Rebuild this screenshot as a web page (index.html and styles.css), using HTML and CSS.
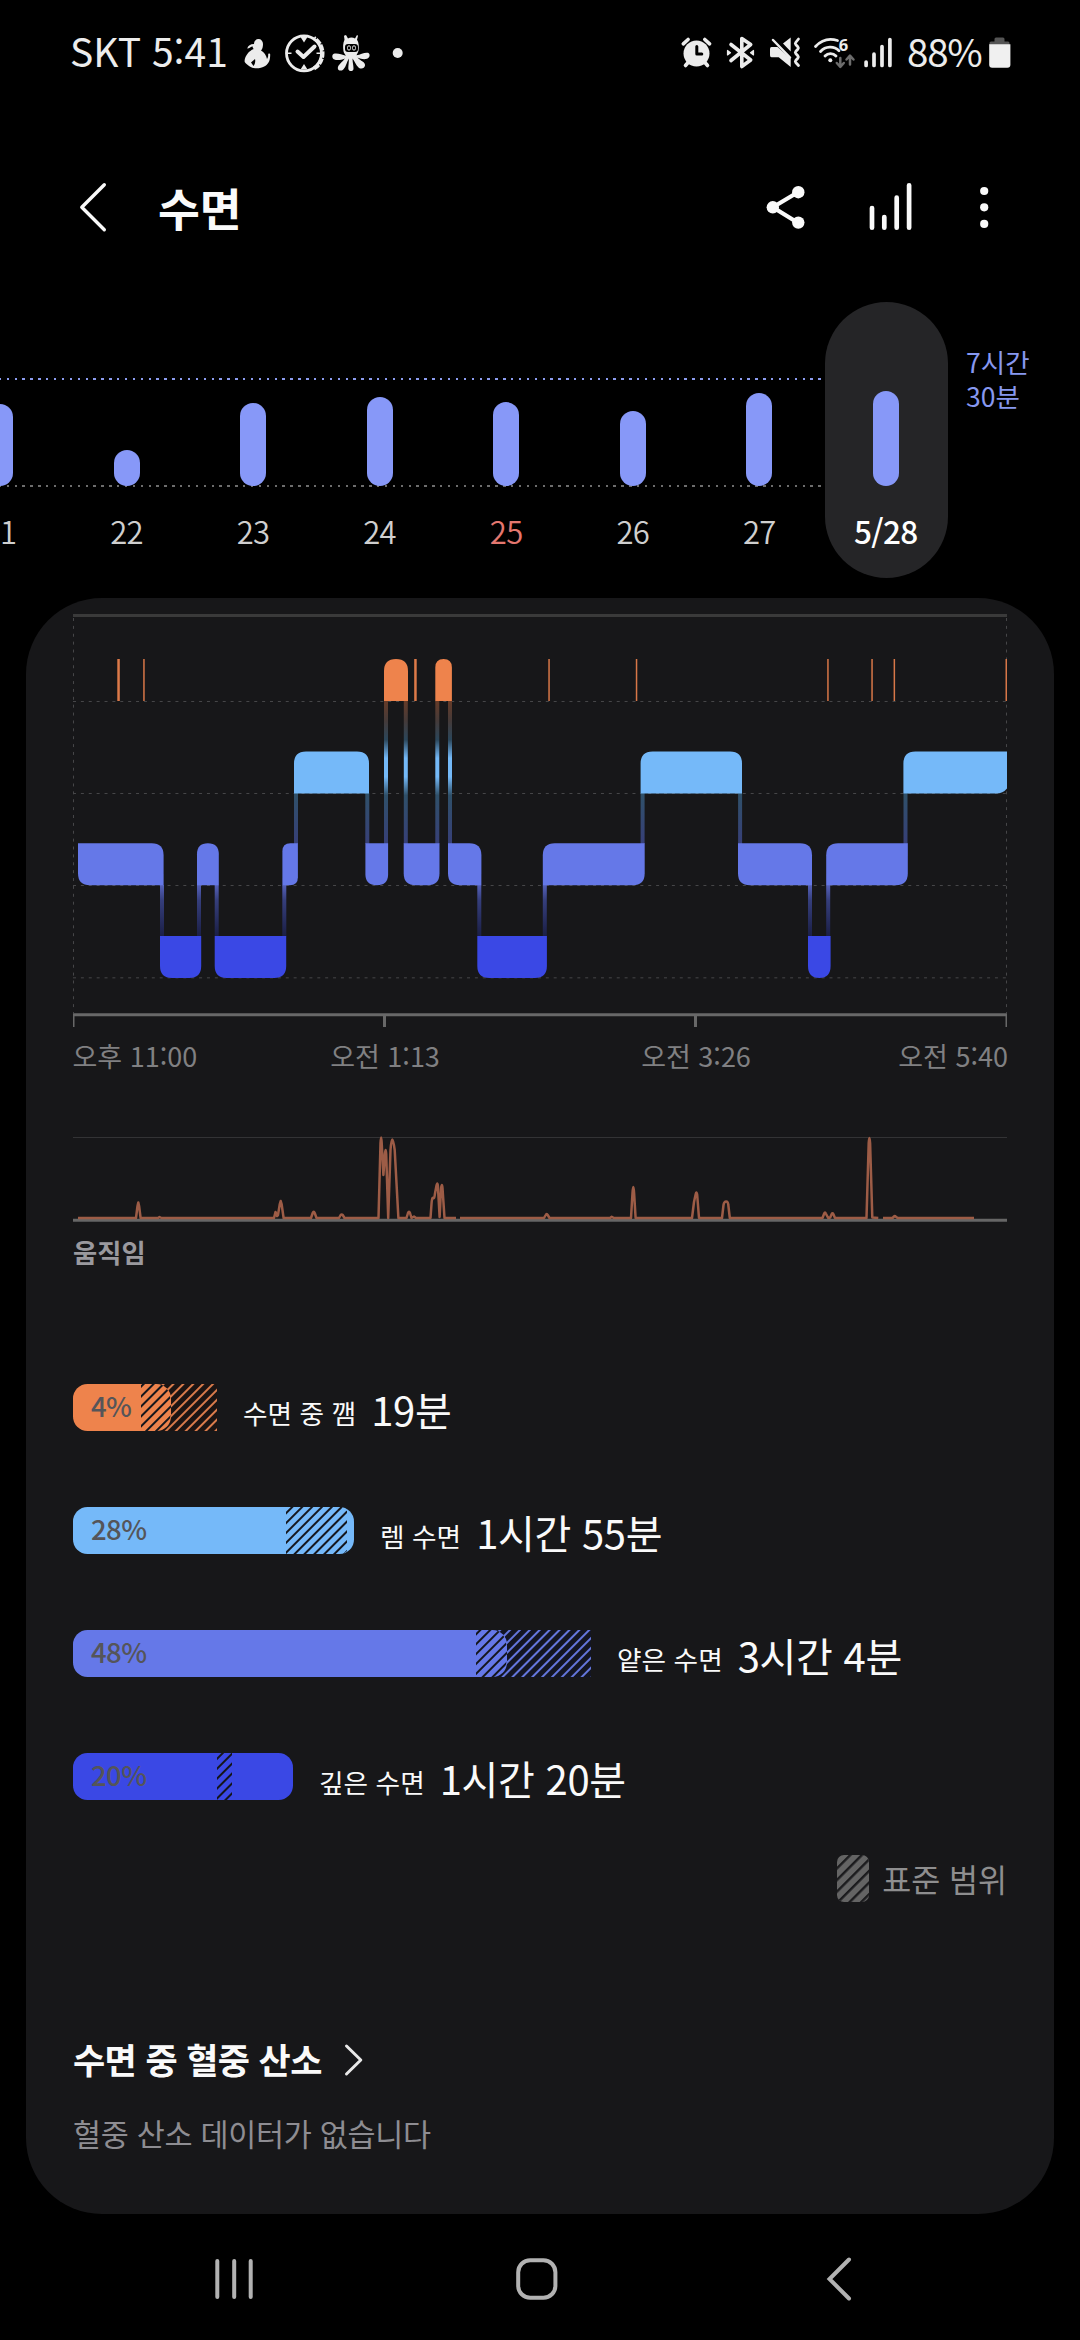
FILE: index.html
```html
<!DOCTYPE html>
<html lang="ko">
<head>
<meta charset="utf-8">
<title>수면</title>
<link rel="stylesheet" href="styles.css">
</head>
<body>
<div class="screen">
  <div class="status">
    <span class="carrier">SKT 5:41</span>
    <svg class="status-left" width="170" height="100" viewBox="240 0 170 100">
      <g fill="#ececec">
        <path d="M254 44c0-3 2-5 4.500-5s4.500 2 4.500 5c0 2.500-.5 5-2 6.500 3 1.500 5.500 5 6 8.500 1.200-1.500 1.200-3 1.200-5 1-.8 2-.5 2 .5 0 5-1 9-5 11.500-3 2-7 2.500-10 2.300-4-.3-8-3-10.500-6.300-.5-3 1-6 3-8.500 1.500-2 3.500-3.500 6-4.500-1-1-1-1.500-1-2.500-2 0-3 2-5.500 2 1-3 3-4.500 6.800-4.500z"/>
        <circle cx="397.700" cy="53" r="5"/>
        <path d="M346 35l2 3.500c2-1.200 5-1.200 7 0l2-3.500 1 .8-1 4c2 2.500 2 7 1.500 11-.5 2-1.500 3-2 4.500 4-.6 8-3.200 11.500-2.500 2.500 1 2 5-1 6-3 .8-6 .2-9.500-1.200 3 3.500 8 4.500 7.500 8-.5 3-4 4-6.500 1.800-3-2.600-4-6.800-6-9 0 3.600 1 7 1 10 0 3.500-5 3.500-5.200 0 0-3 .7-6.400.5-10-2 3.200-2.500 8-5.500 11-2 2-5.500 1.500-5.500-1.500 0-3.500 5-6 7-9.500-3.500 1.500-7.500 2.500-11 .8-2-1.200-2-4.500 0-5.500 4-1 8 1 12 2-.5-1.500-2-2.500-2.300-4.500-.7-4.500-.5-8.500 1-11.500l-.5-4z"/>
      </g>
      <path d="M255 59l-4 3.500 2.500 3.500c1.500-2 2.200-4.500 1.500-7z" fill="#000"/>
      <rect x="345" y="44" width="13" height="8" rx="3" fill="#000"/>
      <rect x="347.500" y="45.800" width="3" height="4.300" rx="1.500" fill="none" stroke="#ddd" stroke-width="1"/>
      <rect x="352.500" y="45.800" width="3" height="4.300" rx="1.500" fill="none" stroke="#ddd" stroke-width="1"/>
      <circle cx="304" cy="53.300" r="17.500" fill="none" stroke="#ececec" stroke-width="2.800"/>
      <path d="M314 68.500c5.500-3 8.500-9 8.500-15.200S319.500 41.500 314 38" fill="none" stroke="#ececec" stroke-width="4" stroke-dasharray="6 1"/>
      <path d="M300.500 37h7l-3.500 5.500zM300.500 69.500h7l-3.500-5.500zM287 52.500h4.500v1.600H287zM316.500 52.500h4.500v1.600h-4.500z" fill="#ececec"/>
      <path d="M297.500 51.500l6 5.500 11-10.500" fill="none" stroke="#ececec" stroke-width="4" stroke-linecap="round" stroke-linejoin="round"/>
    </svg>
    <svg class="status-right" width="224" height="100" viewBox="678 0 224 100" fill="none" stroke="#ececec" stroke-linecap="round" stroke-linejoin="round">
      <circle cx="696.500" cy="53.500" r="13" fill="#ececec" stroke="none"/>
      <path d="M696.800 46.500v7.500h5" stroke="#000" stroke-width="3"/>
      <path d="M683.300 43.800l4.800-4.300M709.600 43.800l-4.800-4.300M685.500 65.500l3-3.500M707.500 65.500l-3-3.500" stroke-width="3.600"/>
      <path d="M731 44.500l19.700 15.500-8.900 6.500v-28l8.900 6L731 60.500" stroke-width="3.600"/>
      <path d="M727.500 50.500v4.500l3-2.300zM753.500 50.500v4.500l-3-2.300z" fill="#ececec" stroke-width="1.200"/>
      <path d="M783 43.500l7.700-6v14zM771.500 47h6l13.200 11.500v8.500l-12-9.700h-7.200q-1.500 0-1.500-2v-6.300q0-2 1.500-2z" fill="#ececec" stroke="none"/>
      <path d="M773 40l17 17.500" stroke-width="2.500"/>
      <path d="M798.500 39l-2.800 3.500q-.8 1 0 2l2.300 2.500q.8 1 0 2l-2.300 2.500q-.8 1 0 2l2.300 2.500q.8 1 0 2l-2.300 2.500q-.8 1 0 2l2.800 3" stroke-width="2.800"/>
      <path d="M815.500 46.500c6-6.500 14-8.500 22-6M820.500 51.500c5-5.500 13.500-5.800 18.500-.8M825 56c3-3.200 8-3.200 11 0" stroke-width="2.800"/>
      <circle cx="830.300" cy="60.300" r="2" fill="#ececec" stroke="none"/>
      <text x="838.800" y="51" class="wifi-gen">6</text>
      <path d="M840.300 58v8.500m-3.500-3.500l3.500 3.800 3.500-3.800M850 64.500v-8.500m-3.500 3.500l3.500-3.800 3.500 3.800" stroke="#6c6c6c" stroke-width="2.500"/>
      <path d="M866.100 62v3.500M874 54.200v11.300M882 46.500v19M889.900 39.600v25.900" stroke-width="3.700"/>
    </svg>
    <span class="battery-pct">88%</span>
    <svg class="battery" width="22" height="100" viewBox="989 0 22 100">
      <path d="M989.500 45v-2q0-1.500 1.500-1.500h3.500v-2.500q0-1.500 1.500-1.500h7q1.500 0 1.500 1.500v2.500h3.500q1.500 0 1.500 1.500v2z" fill="#555"/>
      <path d="M989.200 44.300h21.200v20.500q0 3-3 3h-15.200q-3 0-3-3z" fill="#f0f0f0"/>
    </svg>
  </div>

  <header class="header">
    <svg width="34" height="56" viewBox="76 179 34 56"><path d="M104.300 184.700L81.800 207.300l22.500 22.500" fill="none" stroke="#fafafa" stroke-width="3.400" stroke-linecap="round" stroke-linejoin="round"/></svg>
    <h1>수면</h1>
    <svg class="actions" width="230" height="60" viewBox="764 177 230 60" fill="#fafafa" stroke="#fafafa">
      <path d="M798.300 192l-25.500 15.300 25.500 15.700" fill="none" stroke-width="4.200"/>
      <g stroke="none"><circle cx="772.800" cy="207.300" r="6.200"/><circle cx="798.300" cy="192.200" r="6.200"/><circle cx="798.300" cy="222.600" r="6.200"/>
      <circle cx="984.200" cy="191" r="4.100"/><circle cx="984.200" cy="207.300" r="4.100"/><circle cx="984.200" cy="223.900" r="4.100"/></g>
      <path d="M872 208v19.700M884.300 217v10.700M896.700 197.700v30M909.100 185.300v42.400" stroke-width="4.700" stroke-linecap="round"/>
    </svg>
  </header>

  <section class="week">
    <div class="day"><div class="plot"><i style="height:82px"></i></div><span>21</span></div>
    <div class="day"><div class="plot"><i style="height:36px"></i></div><span>22</span></div>
    <div class="day"><div class="plot"><i style="height:83.500px"></i></div><span>23</span></div>
    <div class="day"><div class="plot"><i style="height:89px"></i></div><span>24</span></div>
    <div class="day sunday"><div class="plot"><i style="height:84.500px"></i></div><span>25</span></div>
    <div class="day"><div class="plot"><i style="height:75px"></i></div><span>26</span></div>
    <div class="day"><div class="plot"><i style="height:93px"></i></div><span>27</span></div>
    <div class="day selected"><div class="plot"><i style="height:95px"></i></div><span>5/28</span></div>
    <p class="goal">7시간<br>30분</p>
  </section>

  <main class="card">
    <svg class="stages" width="934" height="490" viewBox="73 598 934 490">
      <defs>
        <linearGradient id="gLD" x1="0" y1="885" x2="0" y2="936" gradientUnits="userSpaceOnUse"><stop offset="0" stop-color="#5561ba"/><stop offset=".3" stop-color="#353e7c"/><stop offset="1" stop-color="#1b1f46"/></linearGradient>
        <linearGradient id="gRL" x1="0" y1="793" x2="0" y2="844" gradientUnits="userSpaceOnUse"><stop offset="0" stop-color="#2f5169"/><stop offset="1" stop-color="#373f78"/></linearGradient>
        <linearGradient id="gWL" x1="0" y1="701" x2="0" y2="844" gradientUnits="userSpaceOnUse"><stop offset="0" stop-color="#663b28"/><stop offset=".14" stop-color="#443a39"/><stop offset=".27" stop-color="#2b465a"/><stop offset=".4" stop-color="#74b9f8"/><stop offset=".53" stop-color="#74b9f8"/><stop offset=".66" stop-color="#2f5069"/><stop offset="1" stop-color="#373f78"/></linearGradient>
      </defs>
      <g fill="none" stroke="#464648" stroke-width="1" stroke-dasharray="3 4.880">
        <path d="M73.500 618V1013M1006.500 618V1013M73 701.500H1007M73 793.500H1007M73 885.500H1007"/>
        <path d="M73 977.700H1007" stroke-width="1.500" stroke="#363638"/>
      </g>
      <path d="M73 614h934v3H73z" fill="#3a3a3a"/>
      <path d="M73 1013.300h934v3H73z" fill="#686868"/>
      <path d="M73 1016h1.500v11H73zM383 1016h3v11h-3zM694 1016h3v11h-3zM1005.500 1016h1.500v11h-1.500z" fill="#686868"/>
      <g fill="url(#gLD)"><path d="M160 885h4v51h-4zM197 885h4v52h-4zM214.700 885h4v51h-4zM282.300 885h4v52h-4zM477.300 885h4v51h-4zM542.800 885h4v52h-4zM808 885h4v51h-4zM826.200 885h4v52h-4z"/></g>
      <g fill="url(#gRL)"><path d="M294 793h4v51h-4zM365.300 793h4v51h-4zM640.600 793h4v51h-4zM738.100 793h4v51h-4zM903.500 793h4v51h-4z"/></g>
      <g fill="url(#gWL)"><path d="M384 701h4v143h-4zM403.800 701h4v143h-4zM435.300 701h4v143h-4zM448 701h4v143h-4z"/></g>
      <g fill="#ee834c">
        <path d="M384 701v-30q0-12 12-12t12 12v30zM435.300 701v-33.500q0-8.500 8.300-8.500t8.300 8.500V701z"/>
        <path d="M117.300 659h2.500v42h-2.500zM414.200 659h2.500v42h-2.500z" fill="#dd7a49"/>
        <path d="M143.200 659h1.500v42h-1.500zM548.300 659h1.500v42h-1.500zM635.800 659h1.500v42h-1.500zM827.200 659h1.500v42h-1.500zM871.300 659h1.500v42h-1.500zM893.600 659h1.500v42h-1.500zM1005.500 659h1.500v42h-1.500z" fill="#d87748"/>
      </g>
      <g fill="#75b9f9">
        <path d="M294 793.500v-30q0-12 12-12h51q12 0 12 12v30zM640.600 793.500v-30q0-12 12-12H730q12 0 12 12v30zM903.400 793.500v-30q0-12 12-12h91.600v37q-4 5-11 5z"/>
      </g>
      <g fill="#6578e8">
        <path d="M78 843.300h73.600q12 0 12 12v30H90q-12 0-12-12z"/>
        <path d="M197 885.300v-31q0-11 10.900-11t10.900 11v31z"/>
        <path d="M282.400 885.300v-34q0-8 8-8h7.500v34q0 8-8 8z"/>
        <path d="M365.400 843.300h22.700v31q0 11-11.300 11t-11.400-11z"/>
        <path d="M403.700 843.300h35.800v30q0 12-12 12h-11.800q-12 0-12-12z"/>
        <path d="M448 843.300h21.400q12 0 12 12v30H460q-12 0-12-12z"/>
        <path d="M542.800 885.300v-30q0-12 12-12h89.900v30q0 12-12 12z"/>
        <path d="M738 843.300h62q12 0 12 12v30h-62q-12 0-12-12z"/>
        <path d="M826.200 885.300v-30q0-12 12-12h69.600v30q0 12-12 12z"/>
      </g>
      <g fill="#3a48e5">
        <path d="M160 936h41.200v30q0 12-12 12H172q-12 0-12-12zM214.700 936h71.500v30q0 12-12 12h-47.500q-12 0-12-12zM477.300 936h69.600v30q0 12-12 12h-45.600q-12 0-12-12zM808 936h22.600v30q0 12-11.300 12T808 966z"/>
      </g>
      <g class="axis">
        <text x="72.500" y="1066.500">오후 11:00</text>
        <text x="385" y="1066.500" text-anchor="middle">오전 1:13</text>
        <text x="696" y="1066.500" text-anchor="middle">오전 3:26</text>
        <text x="1008" y="1066.500" text-anchor="end">오전 5:40</text>
      </g>
    </svg>
    <svg class="movement" width="934" height="146" viewBox="73 1088 934 146">
      <path d="M73 1137h934v1H73z" fill="#333335"/>
      <path d="M73 1218.700h934v3H73z" fill="#666"/>
      <path d="M78 1218H136l1.500-12 .8-3.500.8 3.500 1.500 12H158l1.500-1 2 1H274l1.500-6 1.500 4 1-1 1.800-11 .9-3 .9 3 2 14H311l1.700-5q1-2.500 2 0l1.800 5H339l1.700-3q1-1 2 0l1.800 3H378.500l2-75q.7-11 1.200 0l1.700 32 1.500-21q.8-8 1.300 0l2 64 2.300-68q1.500-21 4.200 0l3.700 68H406.500l1.500-5q1-2.500 2 0l1.500 5 2.500-1.500 2 1.500H430.500l1-14q.5-7 1.700-6t1.700-4l1.500-8q1-5 1.500 0l1.700 31 1.500-29q.9-6 1.400 0l2 30H456M460 1218H544l1.700-3q1-2 2 0l1.800 3H610l1.700-1.200 2.300 1.200H631l1.500-25q.8-12 1.600 0l1.500 25H692l2-16 1.500-7q1-5 1.700 0l1.800 23H722l1.500-13q.6-3.500 2.600-3.500t2.200 3.500l1.500 13H822.500l1.700-4.500q.8-2 1.600 0l2.400 4.500 2-.5 1.500-3.500q.8-1.500 1.600 0l1.700 4H866.500l2.200-75q.7-10 1.400 0l2.200 74.500 6 .5M883 1218H892.500l1.500-1.500q.8-.8 1.600 0l2 1.500H974" fill="none" stroke="#9d5c46" stroke-width="2.500" stroke-linejoin="round"/>
    </svg>
    <h2 class="caption">움직임</h2>

    <svg class="defs" width="0" height="0">
      <defs>
        <pattern id="dark" width="7" height="7" patternUnits="userSpaceOnUse" patternTransform="rotate(45)"><path d="M0 0h2v7H0z" fill="#15161c"/></pattern>
        <pattern id="wide" width="8.200" height="8.200" patternUnits="userSpaceOnUse" patternTransform="rotate(45)"><path d="M0 0h2.400v8.200H0z" fill="#1b1b1d"/></pattern>
        <pattern id="orange" width="7" height="7" patternUnits="userSpaceOnUse" patternTransform="rotate(45)"><path d="M0 0h7v7H0z" fill="#1b1413"/><path d="M0 0h2v7H0z" fill="#d97b4b"/></pattern>
        <pattern id="indigo" width="7" height="7" patternUnits="userSpaceOnUse" patternTransform="rotate(45)"><path d="M0 0h7v7H0z" fill="#131522"/><path d="M0 0h2v7H0z" fill="#6476dc"/></pattern>
      </defs>
    </svg>
    <ul class="breakdown">
      <li>
        <div class="meter"><svg width="144" height="47"><path d="M85 0h59v47H85z" fill="url(#orange)"/><rect width="98" height="47" rx="14.500" fill="#ee834c"/><path d="M68 0h16q14 0 14 23.500T84 47H68z" fill="url(#dark)"/></svg><b>4%</b></div>
        <p><small>수면 중 깸</small>19분</p>
      </li>
      <li>
        <div class="meter"><svg width="281" height="47"><rect width="281" height="47" rx="14.500" fill="#75b9f9"/><path d="M213 0h56l5 4v40l-4 3h-57z" fill="url(#dark)"/></svg><b>28%</b></div>
        <p><small>렘 수면</small>1시간 55분</p>
      </li>
      <li>
        <div class="meter"><svg width="518" height="47"><path d="M420 0h98v47h-98z" fill="url(#indigo)"/><rect width="434" height="47" rx="14.500" fill="#6578e8"/><path d="M403 0h17q14 0 14 23.500T420 47h-17z" fill="url(#dark)"/></svg><b>48%</b></div>
        <p><small>얕은 수면</small>3시간 4분</p>
      </li>
      <li>
        <div class="meter"><svg width="220" height="47"><rect width="220" height="47" rx="14.500" fill="#3a48e5"/><path d="M144 0h15v47h-15z" fill="url(#dark)"/></svg><b>20%</b></div>
        <p><small>깊은 수면</small>1시간 20분</p>
      </li>
    </ul>
    <div class="range">
      <svg width="32" height="47"><rect width="32" height="47" rx="7" fill="#646464"/><rect width="32" height="47" rx="7" fill="url(#wide)"/></svg>
      <span>표준 범위</span>
    </div>
    <div class="oxygen">
      <h3>수면 중 혈중 산소</h3>
      <svg width="22" height="34" viewBox="0 0 22 34"><path d="M3.500 3l14.300 14L3.500 31" fill="none" stroke="#e8e8e8" stroke-width="3" stroke-linecap="round" stroke-linejoin="round"/></svg>
    </div>
    <p class="empty">혈중 산소 데이터가 없습니다</p>
  </main>

  <nav class="nav">
    <svg width="60" height="60" viewBox="0 0 60 60"><path d="M13.300 12v36M30.200 12v36M46.700 12v36" stroke="#b2b2b2" stroke-width="4" stroke-linecap="round"/></svg>
    <svg width="60" height="60" viewBox="0 0 60 60"><rect x="11.200" y="11.200" width="37.200" height="37.600" rx="12" fill="none" stroke="#b2b2b2" stroke-width="4"/></svg>
    <svg width="60" height="60" viewBox="0 0 60 60"><path d="M40 10.500L20.500 30 40 49.500" fill="none" stroke="#b2b2b2" stroke-width="4" stroke-linecap="round"/></svg>
  </nav>
</div>
</body>
</html>
```

FILE: styles.css
```css
* { box-sizing: border-box; margin: 0; padding: 0; }

body {
  background: #000;
  color: #fafafa;
  font-family: "Noto Sans CJK KR", "Noto Sans", sans-serif;
}

svg { display: block; flex: none; }

.screen { width: 1080px; height: 2340px; overflow: hidden; }

/* Status bar */
.status { display: flex; height: 100px; padding-left: 70px; line-height: 100px; color: #ececec; }
.carrier { width: 170px; font-size: 39px; font-weight: 400; white-space: pre; }
.status-right { margin-left: 268px; }
.battery-pct { width: 82px; margin-left: 5px; font-size: 38.5px; font-weight: 400; letter-spacing: -1.2px; }
.wifi-gen { font: 700 16.5px "Noto Sans", sans-serif; fill: #ececec; stroke: none; }

/* Title bar */
.header { display: flex; align-items: center; height: 174px; margin-top: 20px; padding-left: 76px; }
.header h1 { margin-left: 48px; font-size: 45.5px; line-height: 60px; font-weight: 700; }
.actions { margin-left: auto; margin-right: 86px; }

/* Day strip */
.week { position: relative; display: flex; height: 304px; }
.week::before, .week::after {
  content: "";
  position: absolute;
  left: 0;
  width: 822px;
  height: 2px;
  background: repeating-linear-gradient(90deg, #8c9cf0 0 1.2px, transparent 1.2px 6.700px, #8c9cf0 6.700px 7.880px);
}
.week::before { top: 84px; }
.week::after {
  top: 191px;
  background: repeating-linear-gradient(90deg, #6d6d6d 0 1.2px, transparent 1.2px 6.700px, #6d6d6d 6.700px 7.880px);
}
.day { position: relative; z-index: 1; flex: none; width: 126.550px; text-align: center; }
.day:first-child { margin-left: -63.3px; }
.plot { position: relative; display: flex; align-items: flex-end; justify-content: center; height: 192px; }
.plot i { width: 26px; border-radius: 13px; background: #8798f8; }
.day span { position: relative; display: block; margin-top: 25px; font-size: 31px; line-height: 40px; font-weight: 350; letter-spacing: -.7px; color: #cfcfcf; }
.sunday span { color: #e4776f; }
.selected::before { content: ""; position: absolute; left: 2px; top: 8px; width: 123px; height: 276px; border-radius: 61.5px; background: #252527; }
.selected span { font-size: 31.5px; font-weight: 500; line-height: 39px; color: #fff; }
.goal { margin: 51px 0 0 17px; font-size: 26.5px; line-height: 33.5px; font-weight: 400; color: #8798f0; }

/* Sleep card */
.card { width: 1028px; height: 1616px; margin-left: 26px; padding: 0 47px; border-radius: 76px; background: #171719; }
.stages, .movement { overflow: visible; }
.axis text { font-size: 27px; fill: #808082; font-weight: 400; }
.caption { font-size: 26.3px; line-height: 35px; height: 37px; font-weight: 600; color: #9a999e; }

.defs { position: absolute; }
.breakdown { display: grid; row-gap: 76px; margin-top: 113px; list-style: none; }
.breakdown li { display: flex; height: 47px; }
.meter { position: relative; }
.meter b { position: absolute; left: 18px; top: 0; font-size: 27.5px; line-height: 42px; font-weight: 500; letter-spacing: -.6px; color: #555559; }
.breakdown p { margin-left: 26px; font-size: 40px; line-height: 51px; letter-spacing: -.3px; white-space: nowrap; }
.breakdown small { position: relative; top: -2px; margin-right: 15px; font-size: 26.7px; line-height: 30px; letter-spacing: 0; }

.range { display: flex; align-items: center; justify-content: flex-end; gap: 13px; height: 47px; margin-top: 55px; font-size: 31.5px; line-height: 47px; font-weight: 400; color: #8e8e8f; }

.oxygen { display: flex; align-items: center; height: 50px; margin-top: 133px; }
.oxygen h3 { margin-top: -2px; font-size: 35px; line-height: 50px; font-weight: 700; letter-spacing: -.6px; }
.oxygen svg { margin-left: 21px; }
.empty { margin-top: 24px; font-size: 30.5px; line-height: 48px; font-weight: 400; letter-spacing: -.3px; color: #8e8d92; }

/* System navigation */
.nav { display: flex; align-items: center; justify-content: space-between; height: 130px; padding: 0 211px 0 204px; }
```
